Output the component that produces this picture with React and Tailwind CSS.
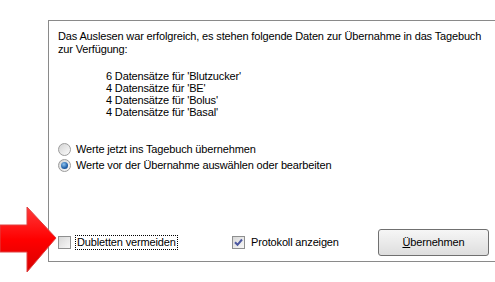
const font = { fontFamily: '"Liberation Sans", Arial, sans-serif' }

function Radio({ checked }) {
    return (
        <span className="relative inline-flex w-[13px] h-[13px] shrink-0 items-center justify-center rounded-full border border-[#9c9c9c] bg-gradient-to-br from-[#d4d4d4] to-[#fbfbfb]">
            {checked && (
                <span className="w-[7px] h-[7px] rounded-full bg-[radial-gradient(circle_at_40%_35%,#8fc4ef,#1f5fa8_60%,#123f7a)]" />
            )}
        </span>
    )
}

function Check({ checked }) {
    return (
        <span className="inline-flex w-[13px] h-[13px] shrink-0 items-center justify-center border border-[#8e8f8f] bg-gradient-to-br from-[#d8d8d8] to-[#f8f8f8]">
            {checked && (
                <svg width="9" height="9" viewBox="0 0 9 9">
                    <path d="M1 4.2 L3.5 6.8 L8 1.5" fill="none" stroke="#4b57a0" strokeWidth="2" />
                </svg>
            )}
        </span>
    )
}

function Arrow() {
    return (
        <svg className="absolute left-0 top-[205px]" width="60" height="70" viewBox="0 0 60 70">
            <defs>
                <linearGradient id="ar" x1="0" y1="0" x2="0" y2="1">
                    <stop offset="0" stopColor="#ff3a3a" />
                    <stop offset="0.5" stopColor="#ff0000" />
                    <stop offset="1" stopColor="#d80000" />
                </linearGradient>
            </defs>
            <path d="M0 20 L27 20 L27 2 L56 33 L27 67 L27 47 L0 47 Z" fill="url(#ar)" stroke="#e04040" strokeWidth="1" />
        </svg>
    )
}

export default function App() {
    return (
        <div className="relative w-[495px] h-[282px] overflow-hidden bg-white text-[11px] tracking-[-0.15px] text-black" style={font}>
            <div className="ml-[48px] mt-[20px] w-[470px] h-[242px] flex flex-col border border-[#8a8a8a] pl-[9px]">
                <div className="pt-[9px] leading-[13px]">
                    <div>Das Auslesen war erfolgreich, es stehen folgende Daten zur Übernahme in das Tagebuch</div>
                    <div>zur Verfügung:</div>
                </div>
                <div className="mt-[14px] pl-[48px] leading-[12px]">
                    <div>6 Datensätze für 'Blutzucker'</div>
                    <div>4 Datensätze für 'BE'</div>
                    <div>4 Datensätze für 'Bolus'</div>
                    <div>4 Datensätze für 'Basal'</div>
                </div>
                <div className="mt-[23px]">
                    <div className="h-[16px] flex items-center gap-[5px]">
                        <Radio />
                        <span>Werte jetzt ins Tagebuch übernehmen</span>
                    </div>
                    <div className="h-[16px] flex items-center gap-[5px]">
                        <Radio checked />
                        <span>Werte vor der Übernahme auswählen oder bearbeiten</span>
                    </div>
                </div>
                <div className="mt-auto pb-[5px] flex items-center">
                    <div className="w-[174px] flex items-center">
                        <Check />
                        <span className="ml-[4px] px-[1px] leading-[13px] border border-dotted border-black">Dubletten vermeiden</span>
                    </div>
                    <div className="w-[146px] flex items-center">
                        <Check checked />
                        <span className="ml-[6px]">Protokoll anzeigen</span>
                    </div>
                    <button className="w-[111px] h-[27px] rounded-[3px] border border-[#707070] bg-gradient-to-b from-[#f6f6f6] to-[#dedede] text-[11px]">
                        <span className="underline">Ü</span>bernehmen
                    </button>
                </div>
            </div>
            <Arrow />
        </div>
    )
}
